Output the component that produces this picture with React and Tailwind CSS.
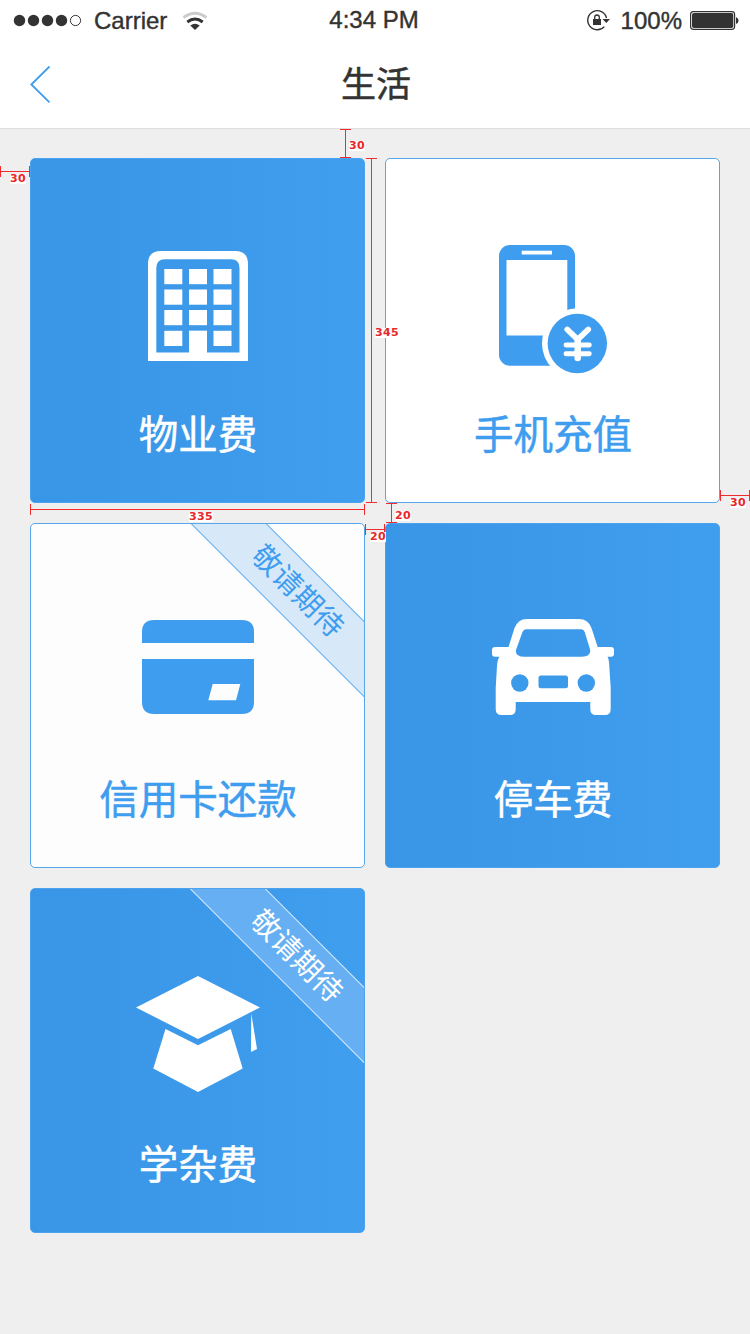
import React from "react";

const BLUE = "#3f9def";

function StatusBar() {
  return (
    <div className="grid h-10 grid-cols-3 items-center px-3 pt-[2px] text-2xl leading-[38px] tracking-normal text-[#333] [-webkit-text-stroke:0.4px_#333]">
      <div className="flex items-center">
        <svg className="-mt-[2px]" width="72" height="16" viewBox="12 12 72 16" fill="#333">
          <circle cx="19.5" cy="20.5" r="5.7" />
          <circle cx="33.5" cy="20.5" r="5.7" />
          <circle cx="47.5" cy="20.5" r="5.7" />
          <circle cx="61.5" cy="20.5" r="5.7" />
          <circle cx="75.5" cy="20.5" r="5.1" fill="none" stroke="#333" strokeWidth="1" />
        </svg>
        <span className="ml-[10px]">Carrier</span>
        <svg className="-mt-px ml-[14px]" width="28" height="20" viewBox="181 10 28 20" fill="none">
          <path d="M183.5 16.5 Q195 8 206.500 16.500" stroke="#ccc" strokeWidth="2.800" />
          <path d="M187.300 21 Q195 15 202.700 21" stroke="#333" strokeWidth="2.900" />
          <path d="M190.300 24.500 Q195 21 199.700 24.500 L195 29 Z" fill="#333" />
        </svg>
      </div>
      <span className="-ml-[2px] -mt-[2px] text-center">4:34 PM</span>
      <div className="-mr-px flex items-center justify-end">
        <svg className="-mt-[2px]" width="26" height="24" viewBox="585 8 26 24" fill="none" stroke="#333">
          <path d="M606.500 18 A9.500 9.500 0 1 0 604.300 26.600" strokeWidth="1.400" />
          <path d="M602.500 19 H610 L606.300 23 Z" fill="#333" stroke="none" />
          <rect x="593" y="19" width="8" height="6" fill="#333" stroke="none" />
          <path d="M594.700 19.500 V17.300 A2.300 2.300 0 0 1 599.300 17.300 V19.500" strokeWidth="1.300" />
        </svg>
        <span className="ml-[10px]">100%</span>
        <svg className="-mt-[2px] ml-[7px]" width="50" height="20" viewBox="689 10 50 20">
          <rect x="690.600" y="11.600" width="44" height="17.800" rx="2.800" fill="none" stroke="#333" strokeWidth="1.200" />
          <rect x="692" y="13" width="41.300" height="15" rx="2" fill="#333" />
          <path d="M736 17.200 C739.300 17.700 739.300 23.300 736 23.800 Z" fill="#333" />
        </svg>
      </div>
    </div>
  );
}

function NavBar() {
  return (
    <div className="grid h-[89px] grid-cols-3 items-center border-b border-[#dedede] px-7">
      <svg width="24" height="40" viewBox="28 64 24 40" fill="none" stroke={BLUE} strokeWidth="1.800">
        <path d="M49.500 66.500 L31.300 84.500 L49.500 102.300" />
      </svg>
      <h1 className="mt-[3px] pl-[2px] text-center text-[35px] font-normal text-[#333] [-webkit-text-stroke:0.5px_#333]">生活</h1>
    </div>
  );
}

const iconClass = "mt-[79px] h-[140px] w-[141px] shrink-0";

function BuildingIcon() {
  const rows = [269, 289.500, 310, 330.800];
  const cols = [164.300, 189, 213.500];
  return (
    <svg className={iconClass} viewBox="127 238 141 140" fill="#fff">
      <path
        fillRule="evenodd"
        d="M148 361 V264 Q148 251 161 251 H235 Q248 251 248 264 V361 Z M156.300 352.500 H239.500 V268 Q239.500 259.200 231 259.200 H165 Q156.300 259.200 156.300 268 Z"
      />
      {rows.map((y) => cols.map((x) => <rect key={`${x}-${y}`} x={x} y={y} width="18" height="15.200" />))}
      <rect x="189" y="330.800" width="18" height="25" />
    </svg>
  );
}

function PhoneIcon() {
  return (
    <svg className={iconClass} viewBox="482 238 141 140" fill={BLUE}>
      <rect x="499" y="245" width="76" height="120.700" rx="11" />
      <rect x="506.500" y="260" width="60.800" height="75.500" fill="#fff" />
      <rect x="521.700" y="250.700" width="30.300" height="3.800" fill="#fff" />
      <circle cx="577.300" cy="343.500" r="35.300" fill="#fff" />
      <circle cx="577.300" cy="343.500" r="29.700" />
      <g fill="none" stroke="#fff" strokeLinecap="round">
        <path d="M567.300 329.500 L577.700 339.500 L588.200 329.500" strokeWidth="5.800" />
        <path d="M577.700 340 V357.900" strokeWidth="6.500" />
        <path d="M566 345 H589.300 M566 353.700 H589.300" strokeWidth="4.900" />
      </g>
    </svg>
  );
}

function CreditCardIcon() {
  return (
    <svg className={iconClass} viewBox="127 603 141 140" fill={BLUE}>
      <path d="M142 643 V632 Q142 620 154 620 H242 Q254 620 254 632 V643 Z" />
      <path
        fillRule="evenodd"
        d="M142 659 H254 V702 Q254 714 242 714 H154 Q142 714 142 702 Z M212.700 684 L208.300 700.300 H236 L240.300 684 Z"
      />
    </svg>
  );
}

function CarIcon() {
  return (
    <svg className={iconClass} viewBox="482 603 141 140" fill="#fff">
      <path
        fillRule="evenodd"
        d="M508.500 647 L514.500 628 Q518 619 527 619 H579 Q588 619 591.500 628 L597.700 647 H611 Q614 647 614 650 V653.500 Q614 656.700 611 656.700 H607.500 Q609 659 609.300 666 L610.700 688 V709 Q610.700 715 605 715 H596 Q590.300 715 590.300 709 V702 H515.700 V709 Q515.700 715 510 715 H501.500 Q495.700 715 495.700 709 V688 L497 666 Q497.500 659 499.500 656.700 H495 Q492 656.700 492 653.500 V650 Q492 647 495 647 Z M526 629.300 Q523.500 629.300 522.500 632 L516 650 Q515 656.700 524.500 656.700 H582 Q591 656.700 590.200 650 L584.700 632 Q583.800 629.300 581.500 629.300 Z"
      />
      <g fill="#3c9aea">
        <circle cx="519.800" cy="683" r="8.700" />
        <circle cx="586.300" cy="683" r="8.700" />
        <rect x="538.500" y="675.500" width="29.500" height="12.700" rx="2.500" />
      </g>
    </svg>
  );
}

function GraduationIcon() {
  return (
    <svg className={iconClass} viewBox="127 968 141 140" fill="#fff">
      <path d="M198 976 L260 1007.500 L198 1039 L136 1007.500 Z" />
      <path d="M165.500 1029 L198 1045.300 L230.700 1029 L242.700 1068.500 L198 1092 L153.300 1068.500 Z" />
      <path d="M251.300 1013.500 L257 1049 L251 1052 Z" />
    </svg>
  );
}

function Ribbon({ solid }) {
  const tone = solid
    ? "left-[115px] border-[#cfe6fb] bg-[#65aff2] text-white"
    : "left-[116px] border-[#69b1f1] bg-[#d7e9f9] text-[#3f9def]";
  return (
    <div
      className={`absolute top-[41px] flex h-[54px] w-[300px] rotate-45 items-center justify-center border-y text-[29px] leading-none [-webkit-text-stroke:0px] ${tone}`}
    >
      <span className="-mt-px">敬请期待</span>
    </div>
  );
}

function Tile({ label, icon, solid, ribbon }) {
  const tone = solid
    ? "border-[#4ba2ee] bg-linear-to-r from-[#3995e5] to-[#409eef] text-white"
    : ribbon
      ? "border-[#55a6ea] bg-[#fdfdfd] text-[#3f9def]"
      : "border-[#55a6ea] bg-white text-[#3f9def]";
  return (
    <div
      className={`relative flex h-[345px] flex-col items-center overflow-hidden rounded-[5px] border [-webkit-text-stroke:0.5px_currentColor] ${tone}`}
    >
      {icon}
      <span className="mt-[27px] pl-px text-[39.5px] leading-[60px]">{label}</span>
      {ribbon && <Ribbon solid={solid} />}
    </div>
  );
}

function Measurements() {
  const labels = [
    ["30", "left-[10px] top-[174px]"],
    ["30", "left-[349px] top-[141px]"],
    ["345", "left-[375px] top-[328px]"],
    ["335", "left-[189px] top-[512px]"],
    ["20", "left-[395px] top-[511px]"],
    ["20", "left-[370px] top-[532px]"],
    ["30", "left-[730px] top-[498px]"],
  ];
  return (
    <div className="pointer-events-none absolute inset-0">
      <svg width="750" height="1334" className="block" fill="none" stroke="#f22b2f" shapeRendering="crispEdges">
        <path d="M0 171.500 H30 M0.500 166 V177 M29.500 166 V177" />
        <path d="M345.500 129 V158 M340 129.500 H351 M340 157.500 H351" />
        <path d="M371.500 158 V503 M366 158.500 H377 M366 502.500 H377" />
        <path d="M30 509.500 H365 M30.500 504 V515 M364.500 504 V515" />
        <path d="M391.500 503 V523 M386 503.500 H397 M386 522.500 H397" />
        <path d="M365 529.500 H385 M365.500 524 V535 M384.500 524 V535" />
        <path d="M720 495.500 H750 M720.500 490 V501 M749.500 490 V501" />
      </svg>
      {labels.map(([text, place]) => (
        <span
          key={place}
          className={`absolute bg-white font-['DejaVu_Sans'] text-[11px] font-bold leading-[10px] tracking-[0.3px] text-[#e8262a] ${place}`}
        >
          {text}
        </span>
      ))}
    </div>
  );
}

export default function App() {
  return (
    <div className="relative h-[1334px] w-[750px] overflow-hidden bg-[#efefef] font-['Liberation_Sans','Noto_Sans_CJK_SC',sans-serif]">
      <header className="bg-white">
        <StatusBar />
        <NavBar />
      </header>
      <main className="grid grid-cols-2 gap-5 px-[30px] pt-[29px]">
        <Tile label="物业费" icon={<BuildingIcon />} solid />
        <Tile label="手机充值" icon={<PhoneIcon />} />
        <Tile label="信用卡还款" icon={<CreditCardIcon />} ribbon />
        <Tile label="停车费" icon={<CarIcon />} solid />
        <Tile label="学杂费" icon={<GraduationIcon />} solid ribbon />
      </main>
      <Measurements />
    </div>
  );
}
